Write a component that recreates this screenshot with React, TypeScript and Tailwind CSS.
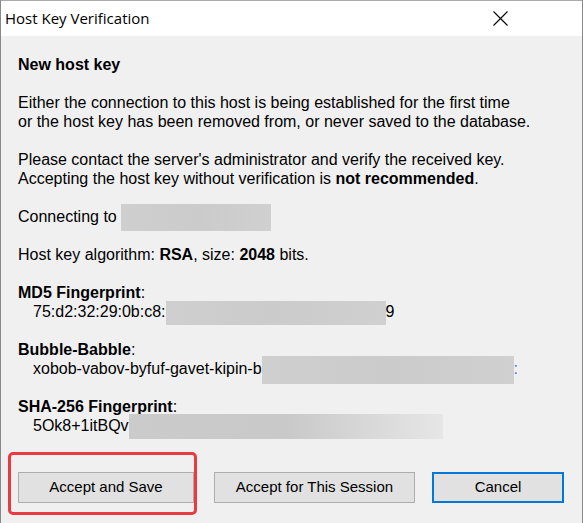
import React from 'react'

const body = "font-['Liberation_Sans',Arial,sans-serif]"

function Redact({ w, h = 26, fade = false }: { w: number; h?: number; fade?: boolean }) {
  return (
    <span
      className={
        'inline-block align-middle -my-[6px] ' +
        (fade
          ? 'bg-gradient-to-r from-[#cbcbcb] via-[#c9c9c9] to-[#e6e6e6]'
          : 'bg-gradient-to-r from-[#cfcfcf] via-[#cbcbcb] to-[#d0d0d0]')
      }
      style={{ width: w, height: h }}
    />
  )
}

function Btn({ label, primary = false, w }: { label: string; primary?: boolean; w: number }) {
  return (
    <button
      type="button"
      className={
        'h-[31px] bg-[#e1e1e1] text-[15px] text-black ' +
        (primary ? 'border-2 border-[#0078d7]' : 'border border-[#adadad]')
      }
      style={{ width: w }}
    >
      {label}
    </button>
  )
}

export default function App() {
  return (
    <div className="w-[583px] h-[523px] overflow-hidden bg-[#f0f0f0] border-x border-[#888888] flex flex-col">
      <div className="h-[36px] shrink-0 bg-white border-t border-[#aaaaaa] flex items-center justify-between pl-[4px] pr-[74px]">
        <span className="font-['Open_Sans',sans-serif] text-[15px] text-black leading-none">Host Key Verification</span>
        <svg width="15" height="15" viewBox="0 0 15 15" className="text-black">
          <path d="M0.5 0.5 L14.5 14.5 M14.5 0.5 L0.5 14.5" stroke="currentColor" strokeWidth="1.1" fill="none" />
        </svg>
      </div>

      <div className={`${body} text-[16px] leading-[19px] text-black pl-[17px] pt-[19px]`}>
        <p className="font-bold">New host key</p>
        <p className="mt-[19px]">
          Either the connection to this host is being established for the first time
          <br />
          or the host key has been removed from, or never saved to the database.
        </p>
        <p className="mt-[19px]">
          Please contact the server's administrator and verify the received key.
          <br />
          Accepting the host key without verification is <b>not recommended</b>.
        </p>
        <p className="mt-[19px]">
          Connecting to <Redact w={150} h={27} />
        </p>
        <p className="mt-[19px]">
          Host key algorithm: <b>RSA</b>, size: <b>2048</b> bits.
        </p>
        <div className="mt-[19px]">
          <p><b>MD5 Fingerprint</b>:</p>
          <p className="pl-[15px]">
            75:d2:32:29:0b:c8:<Redact w={220} h={24} />9
          </p>
        </div>
        <div className="mt-[19px]">
          <p><b>Bubble-Babble</b>:</p>
          <p className="pl-[15px] whitespace-nowrap">
            xobob-vabov-byfuf-gavet-kipin-b<Redact w={252} h={28} />
            <span className="text-[#3a7bd5]">:</span>
          </p>
        </div>
        <div className="mt-[19px]">
          <p><b>SHA-256 Fingerprint</b>:</p>
          <p className="pl-[15px]">
            5Ok8+1itBQv<Redact w={314} h={25} fade />
          </p>
        </div>
      </div>

      <div className={`${body} flex items-center pl-[17px] mt-[37px]`}>
        <div className="relative">
          <Btn label="Accept and Save" w={176} />
          <div className="absolute -left-[10px] -top-[20px] w-[189px] h-[63px] rounded-[5px] border-[3px] border-[#ec3b40] pointer-events-none" />
        </div>
        <div className="ml-[20px]">
          <Btn label="Accept for This Session" w={201} />
        </div>
        <div className="ml-[17px]">
          <Btn label="Cancel" primary w={132} />
        </div>
      </div>
    </div>
  )
}
